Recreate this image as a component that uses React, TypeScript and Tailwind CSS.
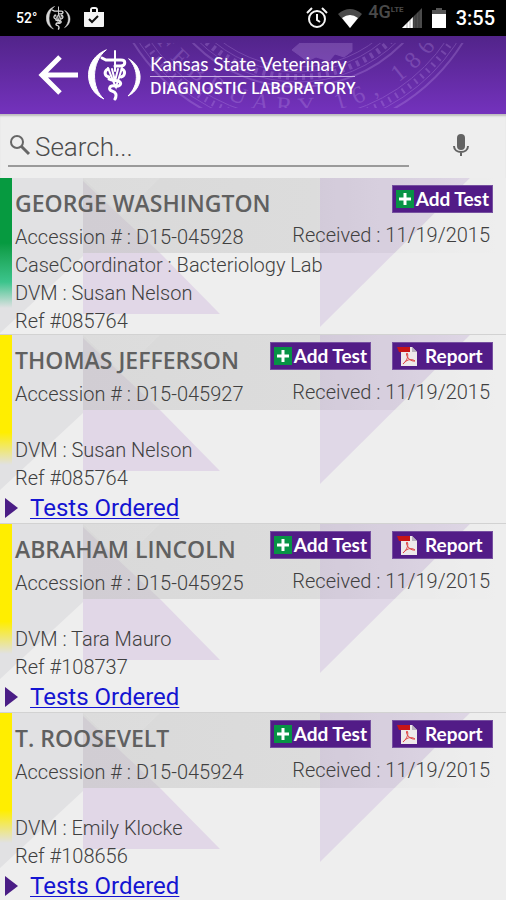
type Patient = {
  name: string;
  accession: string;
  coordinator?: string;
  dvm: string;
  refNo: string;
  done: boolean;
};

const patients: Patient[] = [
  { name: "GEORGE WASHINGTON", accession: "D15-045928", coordinator: "Bacteriology Lab", dvm: "Susan Nelson", refNo: "085764", done: false },
  { name: "THOMAS JEFFERSON", accession: "D15-045927", dvm: "Susan Nelson", refNo: "085764", done: true },
  { name: "ABRAHAM LINCOLN", accession: "D15-045925", dvm: "Tara Mauro", refNo: "108737", done: true },
  { name: "T. ROOSEVELT", accession: "D15-045924", dvm: "Emily Klocke", refNo: "108656", done: true },
];

function VetEmblem({ className }: { className: string }) {
  return (
    <svg className={className} viewBox="0 0 54 52" fill="none" stroke="currentColor" strokeLinecap="round" aria-hidden="true">
      <path d="M18 1C-5 10-5 41 16 50C3 39 3 13 18 1Z" fill="currentColor" />
      <path d="M41 10C56 18 56 39 40 47C51 36 51 21 41 10Z" fill="currentColor" />
      <path d="M27 2V22" strokeWidth="2" />
      <path d="M14 9L18 11H33C38 11 38 16 33 17H27" strokeWidth="3" />
      <path d="M20 20C16 22 16 27 21 28M34 20C38 22 37 27 33 28" strokeWidth="3" />
      <path d="M20 19L26 34L28 38L34 19M24 20L27 32L30 20" strokeWidth="2" />
      <path d="M21 30C24 32 30 31 32 33C34 36 30 38 27 37C21 36 20 41 24 42C28 43 29 46 27 50" strokeWidth="3" />
    </svg>
  );
}

function Seal() {
  return (
    <svg className="absolute left-0 top-0 h-full w-[506px]" viewBox="0 36 506 78" fill="none" stroke="#c9a5ee" aria-hidden="true">
      <defs>
        <clipPath id="sealClip"><rect x="120" y="43" width="386" height="65" /></clipPath>
        <path id="sealText" d="M124 -60A174 174 0 0 0 472 -60" />
      </defs>
      <g clipPath="url(#sealClip)" opacity="0.25">
        <circle cx="298" cy="-60" r="194" strokeWidth="2" />
        <circle cx="298" cy="-60" r="184" strokeWidth="6" strokeDasharray="2 6" />
        <circle cx="298" cy="-60" r="189" />
        <circle cx="298" cy="-60" r="179" />
        <circle cx="298" cy="-60" r="147" strokeWidth="2" />
        <circle cx="298" cy="-60" r="137" strokeWidth="6" strokeDasharray="3 5" />
        <circle cx="298" cy="-60" r="142" />
        <circle cx="298" cy="-60" r="132" />
        <circle cx="298" cy="-60" r="127" />
        <path d="M292 50l8-7h52l0 8-8 6-9-3-6 7-13-4-9 4-8-6z" fill="#c9a5ee" />
        <text fill="#c9a5ee" stroke="none" fontFamily="Liberation Serif, serif" fontSize="24" letterSpacing="8" textAnchor="end">
          <textPath href="#sealText" startOffset="440">FEBRUARY 16, 186</textPath>
        </text>
      </g>
    </svg>
  );
}

function StatusBar() {
  return (
    <div className="flex h-9 items-center bg-black pl-4 pr-[11px] text-white">
      <span className="w-[30px] text-[14px] font-medium">52°</span>
      <VetEmblem className="h-6 w-[25px] text-[#d8d8d8]" />
      <svg className="ml-3 h-6 w-[22px]" viewBox="0 0 22 24" aria-hidden="true">
        <path d="M1 6H7V4Q7 1 10 1H12Q15 1 15 4V6H21V20Q21 21 20 21H2Q1 21 1 20ZM9 6H13V3H9Z" fill="#f4f4f4" />
        <path d="M6 13l3 3 6-6" fill="none" stroke="#111" strokeWidth="2" />
      </svg>
      <svg className="ml-auto h-6 w-[22px]" viewBox="0 0 22 24" fill="none" stroke="#f4f4f4" strokeWidth="2" aria-hidden="true">
        <circle cx="11" cy="13" r="8" /><path d="M11 8v6l3 2M1 7l5-5M21 7l-5-5" />
      </svg>
      <svg className="ml-[9px] h-6 w-[26px]" viewBox="0 0 26 24" aria-hidden="true">
        <path d="M1 8Q13-2 25 8L13 22Z" fill="#4b4b4b" />
        <path d="M5 12Q13 6 21 12L13 22Z" fill="#fff" />
      </svg>
      <span className="mb-3 ml-[5px] flex items-start text-[#4a4a4a]">
        <span className="text-[18px] font-medium leading-5">4G</span>
        <span className="pt-1 text-[8px] font-bold leading-[8px]">LTE</span>
      </span>
      <svg className="-ml-[5px] h-6 w-6" viewBox="0 0 24 24" aria-hidden="true">
        <path d="M23 2V22H3Z" fill="#4b4b4b" /><path d="M14 11V22H3Z" fill="#fff" />
        <path d="M8 12v10M11 10v12M14 8v14M17 6v16M20 4v18" stroke="#000" opacity=".3" />
      </svg>
      <svg className="ml-2 h-6 w-4" viewBox="0 0 16 24" aria-hidden="true">
        <path d="M1 4H5V2H11V4H15V8H1Z" fill="#555" /><path d="M1 8H15V22H1Z" fill="#fff" />
      </svg>
      <span className="ml-[9px] text-[20px] font-medium leading-6">3:55</span>
    </div>
  );
}

function Header() {
  return (
    <header className="relative flex h-[78px] items-center bg-linear-to-b from-[#52248a] to-[#7432bd] pl-[38px] text-white">
      <Seal />
      <button type="button" aria-label="Back" className="relative">
        <svg className="h-10 w-10" viewBox="0 0 40 40" fill="none" stroke="currentColor" strokeWidth="5" aria-hidden="true">
          <path d="M40 20H4M22 2L4 20L22 38" />
        </svg>
      </button>
      <VetEmblem className="relative ml-[10px] h-[52px] w-[54px]" />
      <h1 className="relative ml-[8px] flex flex-col font-['Open_Sans','Noto_Sans',sans-serif]">
        <span className="border-b border-[#c9b0e4] font-['Lato','Noto_Sans',sans-serif] text-[19px] font-normal leading-[25px]">Kansas State Veterinary</span>
        <span className="text-[16px] font-semibold leading-[23px]">DIAGNOSTIC LABORATORY</span>
      </h1>
    </header>
  );
}

function SearchBar() {
  return (
    <form className="flex h-16 items-start pl-2 pr-[34px] pt-[15px] shadow-[inset_0_3px_2px_-1px_#bdbdbd]">
      <label className="flex h-[38px] w-[401px] shrink items-start border-b-2 border-[#9a9a9a]">
        <svg className="ml-px mt-[5px] h-[22px] w-[22px] shrink-0" viewBox="0 0 22 22" fill="none" stroke="#666" strokeWidth="2" aria-hidden="true">
          <circle cx="8" cy="8" r="6" /><path d="M12 12l8 8" strokeWidth="3" />
        </svg>
        <input aria-label="Search" placeholder="Search..." className="ml-[4px] mt-px h-[34px] min-w-0 flex-1 bg-transparent text-[26px] font-light leading-[34px] outline-none placeholder:text-[#4c4c4c]" />
      </label>
      <button type="button" aria-label="Voice search" className="ml-auto mt-[4px]">
        <svg className="h-[26px] w-[22px]" viewBox="0 0 22 26" fill="none" stroke="#636363" strokeWidth="2" aria-hidden="true">
          <rect x="7" y="1" width="8" height="16" rx="4" fill="#636363" stroke="none" />
          <path d="M4 13c0 8 14 8 14 0M11 19v4" />
        </svg>
      </button>
    </form>
  );
}

function CardBackdrop() {
  return (
    <svg className="absolute left-0 top-0 h-[188px] w-[506px]" viewBox="0 0 506 188" aria-hidden="true">
      <defs>
        <linearGradient id="band" x1="83" x2="506" y1="0" y2="0" gradientUnits="userSpaceOnUse">
          <stop offset="0" stopColor="#d9d9d9" /><stop offset=".55" stopColor="#dcdcdc" /><stop offset="1" stopColor="#eeeeee" />
        </linearGradient>
      </defs>
      <path d="M0 0H83V78L0 155Z" fill="#e1e1e3" />
      <path d="M83 0H506V75H83Z" fill="url(#band)" />
      <path d="M83 75H160L220 136H83Z" fill="#b68fd0" opacity=".24" />
      <path d="M83 3L160 75H83Z" fill="#b5a0c0" opacity=".2" />
      <path d="M122 37L160 0H83Z" fill="#fff" opacity=".1" />
      <path d="M320 0H470L320 149Z" fill="#b292d2" opacity=".24" />
      <path d="M470 0H506V75H395Z" fill="#eeeeee" opacity=".6" />
    </svg>
  );
}

function AddTestButton() {
  return (
    <button type="button" className="flex h-7 w-[101px] items-center justify-between border border-[#7650a0] bg-[#521c87] px-[3px] text-[19px] font-bold leading-6 text-white font-['Lato','Noto_Sans',sans-serif]">
      <svg className="h-[18px] w-[18px] shrink-0" viewBox="0 0 18 18" aria-hidden="true">
        <path d="M0 0H18V18H0Z" fill="#079345" /><path d="M9 3V15M3 9H15" stroke="#fff" strokeWidth="3" />
      </svg>
      <span className="whitespace-nowrap">Add Test</span>
    </button>
  );
}

function ReportButton() {
  return (
    <button type="button" className="flex h-7 w-[101px] items-center gap-2 border border-[#7650a0] bg-[#521c87] pl-1 text-[19px] font-bold leading-6 text-white font-['Lato','Noto_Sans',sans-serif]">
      <svg className="h-5 w-5 shrink-0" viewBox="0 0 20 20" aria-hidden="true">
        <path d="M4 1H15L20 6V20H4Z" fill="#eee9ea" /><path d="M15 1V6H20Z" fill="#b9b3bd" />
        <path d="M0 1H13V6H2Z" fill="#c81516" />
        <path d="M6 18C10 15 12 9 10 7C8 8 12 16 18 15C14 12 9 14 6 18Z" fill="none" stroke="#e04343" />
      </svg>
      <span>Report</span>
    </button>
  );
}

function PatientCard({ patient }: { patient: Patient }) {
  return (
    <li className="relative">
      <div className="absolute inset-0 overflow-hidden border-b border-[#d2d2d2]">
        <CardBackdrop />
        <div className={patient.done ? "relative h-[130px] w-3 bg-linear-to-b from-[#ffee00] from-75% to-[#ffee00]/0" : "relative h-[130px] w-3 bg-linear-to-b from-[#069a40] from-50% via-[#3cc48c] via-80% to-[#3cc48c]/0"} />
      </div>
      <article className="relative">
        <div className="flex items-start justify-between pl-[15px] pr-[13px] pt-[7px]">
          <h2 className="whitespace-nowrap pt-[3px] text-[23px] font-semibold leading-[30px] text-[#606060] font-['Open_Sans','Noto_Sans',sans-serif]">{patient.name}</h2>
          <div className="flex gap-[21px]">
            <AddTestButton />
            {patient.done && <ReportButton />}
          </div>
        </div>
        <div className="flex items-start justify-between pl-[15px] pr-4 pt-[5px] leading-7">
          <p>Accession # : {patient.accession}</p>
          <p className="-mt-[2px]">Received : 11/19/2015</p>
        </div>
        <div className="pl-[15px] leading-7">
          <p className="h-7">{patient.coordinator && `CaseCoordinator : ${patient.coordinator}`}</p>
          <p>DVM : {patient.dvm}</p>
          <p>Ref #{patient.refNo}</p>
        </div>
        {patient.done && (
          <div className="flex h-8 items-center pl-[5px]">
            <svg className="h-[22px] w-[14px]" viewBox="0 0 14 22" aria-hidden="true"><path d="M0 1L13 11L0 21Z" fill="#4a1d85" /></svg>
            <a href="#tests" className="ml-[11px] text-[24px] font-normal leading-7 text-[#1414d2] underline decoration-1 underline-offset-2">Tests Ordered</a>
          </div>
        )}
      </article>
    </li>
  );
}

export default function App() {
  return (
    <div className="h-screen overflow-hidden bg-[#eeeeee] font-['Roboto',sans-serif] text-[20px] font-light text-[#404040]">
      <StatusBar />
      <Header />
      <main>
        <SearchBar />
        <ul>
          {patients.map((patient) => <PatientCard key={patient.accession} patient={patient} />)}
        </ul>
      </main>
    </div>
  );
}
